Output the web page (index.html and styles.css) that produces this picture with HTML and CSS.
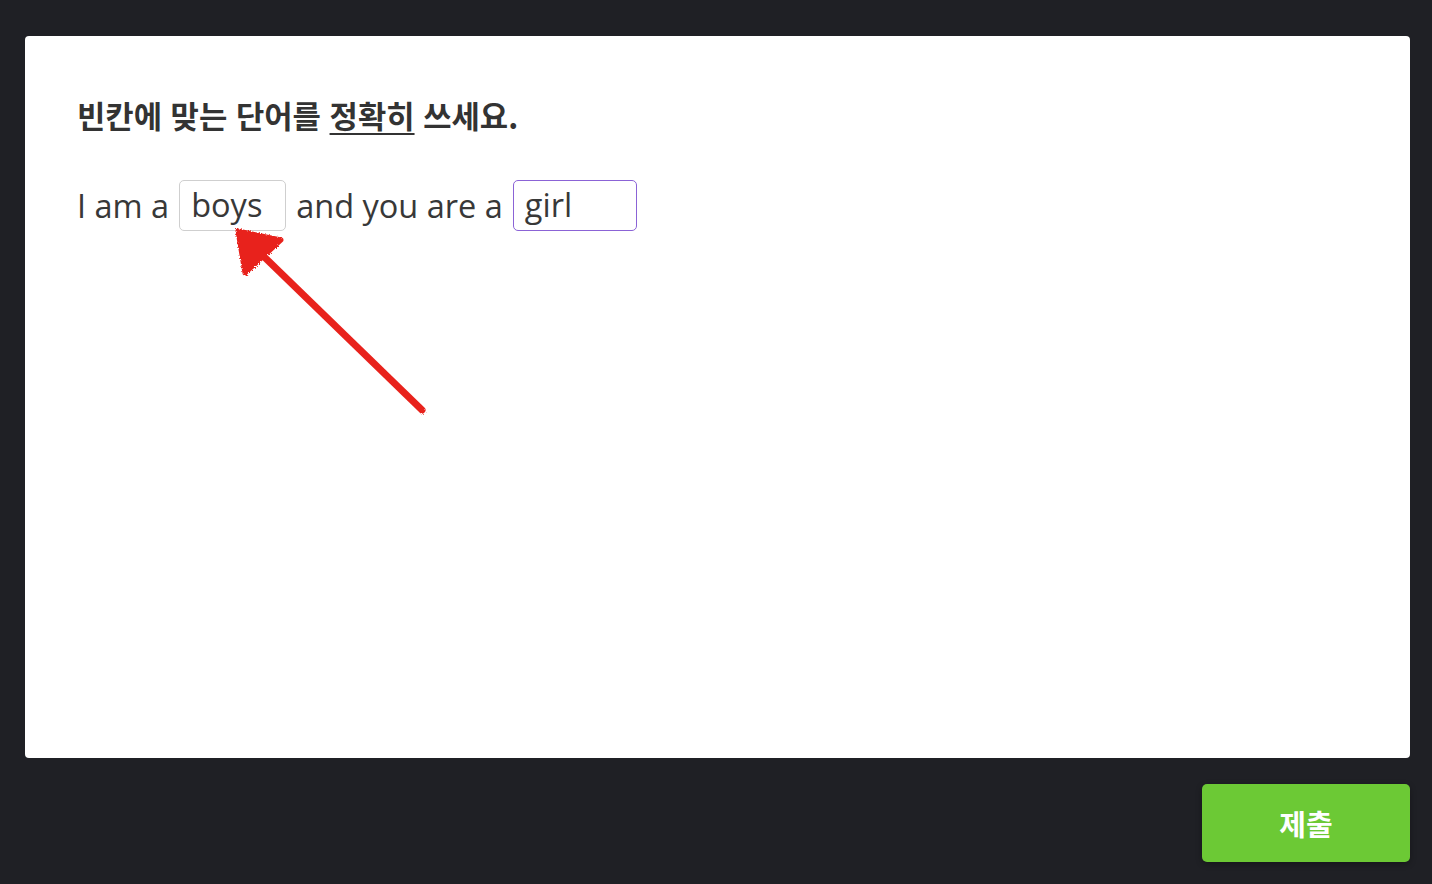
FILE: index.html
```html
<!DOCTYPE html>
<html lang="ko">
<head>
<meta charset="utf-8">
<link rel="stylesheet" href="styles.css">
</head>
<body>
<div class="page">
  <div class="card">
    <h1 class="question">빈칸에 맞는 단어를 <u>정확히</u> 쓰세요.</h1>
    <div class="sentence">
      <span>I am a</span>
      <span class="blank">boys</span>
      <span>and you are a</span>
      <span class="blank active">girl</span>
    </div>
    <svg class="arrow" width="220" height="220" viewBox="0 0 220 220">
      <defs>
        <filter id="rough" x="-10%" y="-10%" width="120%" height="120%">
          <feTurbulence type="fractalNoise" baseFrequency="0.9" numOctaves="2" result="n"/>
          <feDisplacementMap in="SourceGraphic" in2="n" scale="4"/>
        </filter>
      </defs>
      <g filter="url(#rough)">
        <path d="M198 198 L30 35" stroke="#e8221c" stroke-width="7" stroke-linecap="round" fill="none"/>
        <path d="M14 19 L57 28 L21 61 Z" fill="#e8221c" stroke="#e8221c" stroke-width="5" stroke-linejoin="round"/>
      </g>
    </svg>
  </div>
  <div class="actions">
    <button class="submit">제출</button>
  </div>
</div>
</body>
</html>
```
FILE: styles.css
```css
html, body {
  margin: 0;
  padding: 0;
  background: #1f2025;
}
.page {
  width: 1432px;
  height: 884px;
  box-sizing: border-box;
  padding: 36px 22px 0 25px;
  display: flex;
  flex-direction: column;
}
.card {
  position: relative;
  background: #fff;
  border-radius: 4px;
  height: 722px;
  box-sizing: border-box;
  padding: 58px 52px 0 52px;
}
.question {
  margin: 0;
  font-family: "Noto Sans CJK KR", "Open Sans", sans-serif;
  font-weight: 700;
  font-size: 30.8px;
  line-height: 42px;
  color: #333;
}
.question u {
  text-decoration-thickness: 2px;
  text-underline-offset: 5px;
}
.sentence {
  margin-top: 44px;
  display: flex;
  align-items: center;
  gap: 10px;
  font-family: "Open Sans", sans-serif;
  font-size: 32.5px;
  color: #383838;
}
.blank {
  box-sizing: border-box;
  height: 51px;
  border: 1px solid #cfcfcf;
  border-radius: 5px;
  padding: 0 11px;
  line-height: 47px;
  width: 107px;
}
.blank.active {
  border-color: #8b63d6;
  width: 124px;
}
.arrow {
  position: absolute;
  left: 199px;
  top: 176px;
}
.actions {
  display: flex;
  justify-content: flex-end;
  margin-top: 26px;
}
.submit {
  width: 208px;
  height: 78px;
  border: none;
  border-radius: 5px;
  background: #6cc935;
  color: #fff;
  font-family: "Noto Sans CJK KR", sans-serif;
  font-weight: 700;
  font-size: 29px;
  box-shadow: 0 2px 6px rgba(0,0,0,0.3);
}
```
